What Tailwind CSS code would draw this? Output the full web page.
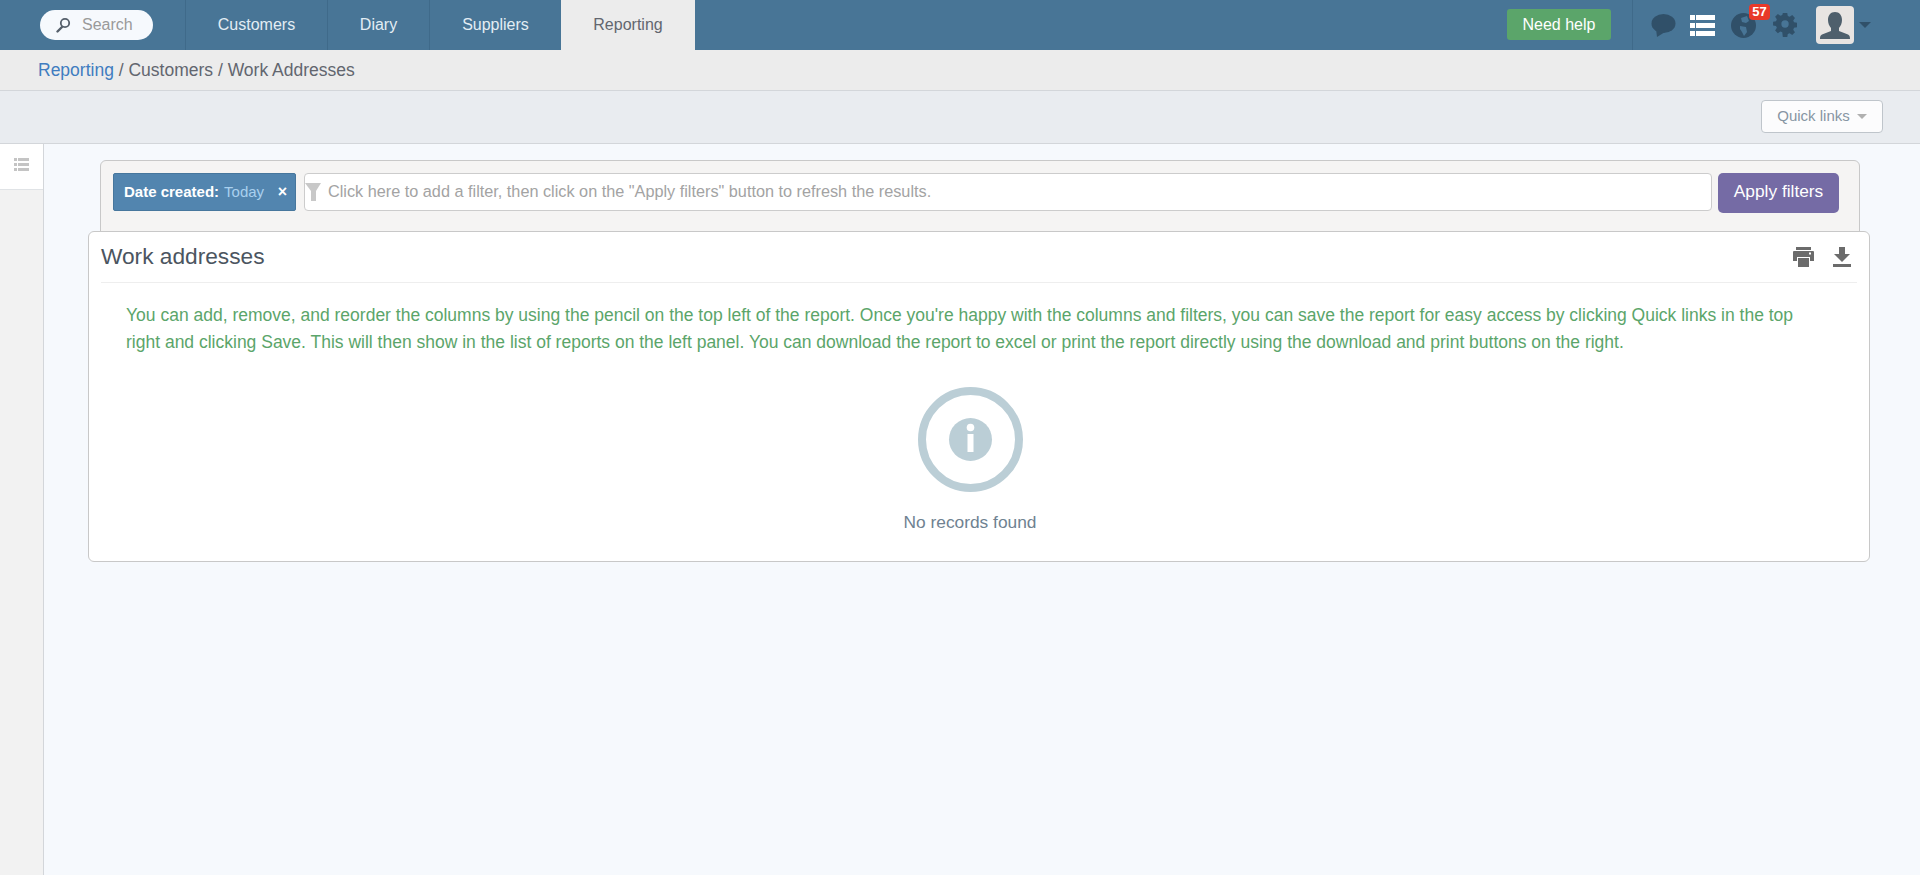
<!DOCTYPE html>
<html lang="en">
<head>
  <meta charset="UTF-8">
  <title>Work Addresses</title>
  <script src="https://cdn.jsdelivr.net/npm/@tailwindcss/browser@4"></script>
</head>
<body class="bg-[#f6f9fd] h-[875px] overflow-hidden flex flex-col font-['Liberation_Sans',Arial,sans-serif] text-[16px] text-[#62666f]">
  <!-- Top nav -->
  <header class="h-[50px] bg-[#487596] flex items-stretch shrink-0">
    <div class="w-[186px] pl-[40px] flex items-center border-r border-[#3f6a8a]">
      <div class="w-[113px] h-[30px] bg-[#f6f9fd] rounded-full flex items-center pl-[15px] gap-[11px]">
        <svg class="w-[16px] h-[16px]" viewBox="0 0 16 16" fill="none" stroke="#555f6b"><circle cx="10" cy="6" r="4.200" stroke-width="1.800"/><path d="M7 10l-4.500 4.500" stroke-width="2.400" stroke-linecap="round"/></svg>
        <span class="text-[#9a9a9a]">Search</span>
      </div>
    </div>
    <nav class="flex items-stretch text-[#e3edf4] text-[16px]">
      <a class="w-[142px] flex items-center justify-center border-r border-[#3f6a8a]">Customers</a>
      <a class="w-[102px] flex items-center justify-center border-r border-[#3f6a8a]">Diary</a>
      <a class="w-[131px] flex items-center justify-center">Suppliers</a>
      <a class="w-[134px] flex items-center justify-center bg-[#ececec] text-[#62666f]">Reporting</a>
    </nav>
    <div class="ml-auto flex items-stretch">
      <div class="flex items-center pr-[21px] border-r border-[#3f6a8a]">
        <button class="w-[104px] h-[31px] bg-[#5ba56a] text-white rounded-[3px] mt-[-1px]">Need help</button>
      </div>
      <div class="w-[287px] relative flex items-center pl-[18px]">
        <svg class="w-[25px] h-[24px]" viewBox="0 0 25 24" fill="#305069"><ellipse cx="12.5" cy="10.5" rx="12" ry="9.5"/><path d="M5 16l1 8 8-5z"/></svg>
        <svg class="w-[25px] h-[24px] ml-[14px]" viewBox="0 0 25 24" fill="#fff"><rect x="0" y="2" width="5" height="5"/><rect x="6" y="2" width="19" height="5"/><rect x="0" y="10" width="5" height="5"/><rect x="6" y="10" width="19" height="5"/><rect x="0" y="18" width="5" height="5"/><rect x="6" y="18" width="19" height="5"/></svg>
        <svg class="w-[25px] h-[25px] ml-[16px]" viewBox="0 0 25 25"><circle cx="12.5" cy="12.5" r="12.5" fill="#305069"/><path d="M10 5l6-2 2 5-3 2-4-1zM9 13l6 1 1 5-3 4-2-4-2-3z" fill="#487596"/></svg>
        <span class="absolute left-[116px] top-[4px] w-[21px] h-[16px] bg-[#e8392a] rounded-[4px] text-white text-[13px] font-bold leading-[16px] text-center">57</span>
        <svg class="w-[24px] h-[24px] ml-[17px]" viewBox="0 0 24 24"><path fill="#305069" fill-rule="evenodd" d="M9.6 0h4.8l.6 3.3 2 .9 2.8-1.9 3 3-1.900 2.800.9 2 3.300.6v4.800l-3.300.6-.9 2 1.900 2.800-3 3-2.800-1.900-2 .9-.6 3.300H9.600L9 20.900l-2-.9-2.800 1.900-3-3L3.100 16.100l-.9-2L-1 13.500V9.600l3.200-.7.9-2L1.200 4.200l3-3L7 3.100l2-.9zM12 8a4 4 0 100 8 4 4 0 000-8z" transform="translate(1 0) scale(.92)"/></svg>
        <div class="w-[38px] h-[38px] ml-[19px] bg-[#e8e4e2] rounded-[4px] overflow-hidden">
          <svg class="w-[38px] h-[38px]" viewBox="0 0 38 38" fill="#4f5f6c"><path d="M19 6c4.500 0 7 3.500 7 8 0 3-1.200 6-3 8v3l9 3.500c1.500.7 2 2 2 4.500H4c0-2.500.5-3.800 2-4.500L15 25v-3c-1.800-2-3-5-3-8 0-4.500 2.500-8 7-8z"/></svg>
        </div>
        <span class="ml-[5px] w-0 h-0 border-x-[6px] border-x-transparent border-t-[6px] border-t-[#305069]"></span>
      </div>
    </div>
  </header>

  <!-- Breadcrumb -->
  <div class="h-[41px] shrink-0 bg-[#ececec] border-b border-[#d3d6da] pl-[38px] flex items-center text-[17.5px]">
    <a class="text-[#3f7cc0]">Reporting</a><span class="whitespace-pre"> / Customers / Work Addresses</span>
  </div>

  <!-- Toolbar -->
  <div class="h-[53px] shrink-0 bg-[#e9ecf0] border-b border-[#d3d6da] flex items-center justify-end pr-[37px]">
    <button class="w-[122px] h-[33px] mt-[-1px] bg-[#fcfcfd] border border-[#bfc5cb] rounded-[4px] text-[15px] text-[#8795a3] flex items-center justify-center gap-[7px]">
      Quick links
      <span class="w-0 h-0 border-x-[5px] border-x-transparent border-t-[5px] border-t-[#b0b0b0]"></span>
    </button>
  </div>

  <div class="flex flex-1 min-h-0">
    <!-- Side rail -->
    <aside class="w-[44px] shrink-0 bg-[#f2f2f2] border-r border-[#d3d6da]">
      <div class="h-[46px] bg-white border-b border-[#e0e3e6] flex justify-center pt-[14px] pr-[1px]">
        <svg class="w-[15px] h-[14px]" viewBox="0 0 15 14" fill="#c4c4c4"><rect y="0" width="3" height="3"/><rect x="4" y="0" width="11" height="3"/><rect y="5" width="3" height="3"/><rect x="4" y="5" width="11" height="3"/><rect y="10" width="3" height="3"/><rect x="4" y="10" width="11" height="3"/></svg>
      </div>
    </aside>

    <main class="flex-1 pl-[44px] pr-[50px] pt-[16px]">
      <!-- Filters -->
      <div class="ml-[12px] mr-[10px] h-[90px] bg-[#f5f4f3] border border-[#c8c8c8] rounded-[6px] pt-[12px] pl-[12px] pr-[20px] flex items-start">
        <div class="w-[183px] h-[38px] bg-[#5285af] border border-[#47779d] rounded-[2px] text-white text-[15px] flex items-center pl-[10px] shrink-0">
          <b>Date created:</b><span class="ml-[5px] text-[#a9d0ee]">Today</span>
          <span class="ml-auto mr-[8px] font-bold text-[16px]">×</span>
        </div>
        <div class="flex-1 h-[38px] ml-[8px] bg-white border border-[#cccccc] rounded-[4px] flex items-center text-[#a3a3a3] text-[16.25px] whitespace-nowrap">
          <svg class="w-[16px] h-[18px] shrink-0" viewBox="0 0 16 18" fill="#c8c8c8"><path d="M0 0h16l-5 8v10H6V8z"/></svg>
          <span class="ml-[7px] mb-[2px]">Click here to add a filter, then click on the "Apply filters" button to refresh the results.</span>
        </div>
        <button class="w-[121px] h-[40px] ml-[6px] pb-[2px] bg-[#756ba5] text-white text-[17.33px] rounded-[5px] shrink-0">Apply filters</button>
      </div>

      <!-- Report card -->
      <section class="-mt-[19px] relative h-[331px] bg-white border border-[#c8c8c8] rounded-[6px] px-[12px]">
        <div class="h-[51px] border-b border-[#eeeeee] flex items-center justify-between">
          <h2 class="text-[22.7px] text-[#4b5560] mb-[2px]">Work addresses</h2>
          <div class="flex items-center gap-[19px] pr-[6px]">
            <svg class="w-[21px] h-[20px]" viewBox="0 0 21 20" fill="#6b6b6b"><path d="M3 0h15v3H3zM1 4h19a1 1 0 011 1v9h-4v-4H4v4H0V5a1 1 0 011-1zM5 11h11v9H5z"/><rect x="16" y="5.500" width="2" height="2" fill="#fff"/></svg>
            <svg class="w-[18px] h-[20px]" viewBox="0 0 18 20" fill="#6b6b6b"><path d="M6 0h6v7h5l-8 8-8-8h5zM0 17h18v3H0z"/></svg>
          </div>
        </div>
        <p class="mt-[19px] pl-[25px] pr-[45px] text-[17.5px] leading-[27px] text-[#5ba56a]">You can add, remove, and reorder the columns by using the pencil on the top left of the report. Once you're happy with the columns and filters, you can save the report for easy access by clicking Quick links in the top right and clicking Save. This will then show in the list of reports on the left panel. You can download the report to excel or print the report directly using the download and print buttons on the right.</p>
        <div class="mt-[31px] pr-[18px] flex flex-col items-center">
          <svg class="w-[105px] h-[105px]" viewBox="0 0 105 105"><circle cx="52.500" cy="52.500" r="48.500" fill="none" stroke="#bbced6" stroke-width="8"/><circle cx="52.500" cy="52.500" r="21.500" fill="#bbced6"/><circle cx="52.500" cy="40.500" r="3.800" fill="#fff"/><rect x="49.500" y="47" width="6" height="18" fill="#fff"/></svg>
          <p class="mt-[18px] text-[17.33px] text-[#6f8291]">No records found</p>
        </div>
      </section>
    </main>
  </div>
</body>
</html>
